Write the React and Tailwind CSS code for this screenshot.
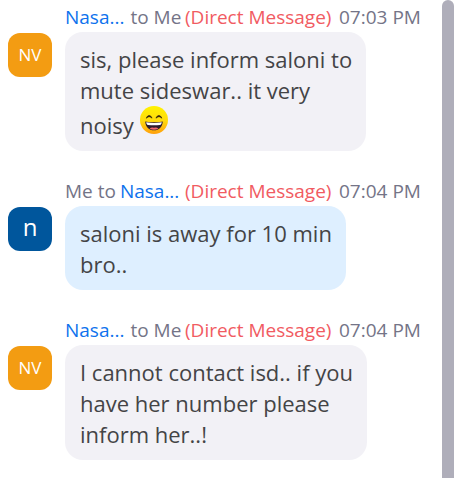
function GrinEmoji() {
  return (
    <svg role="img" aria-label="grinning face" viewBox="0 0 28 28" className="inline-block h-7 w-7 align-baseline">
      <defs>
        <linearGradient id="face" x1="0" y1="0" x2="0" y2="1">
          <stop offset="0" stopColor="#fff200" />
          <stop offset="0.5" stopColor="#ffdc0c" />
          <stop offset="1" stopColor="#ff9f0c" />
        </linearGradient>
      </defs>
      <circle cx="14" cy="14" r="14" fill="url(#face)" />
      <path d="M6.4 12.2C7.4 8.6 10.8 8.6 12 12.2C10.2 10.2 8.2 10.2 6.4 12.2Z" fill="#33240c" stroke="#33240c" strokeWidth="0.7" strokeLinejoin="round" />
      <path d="M16 12.2C17.2 8.6 20.6 8.6 21.8 12.2C20 10.2 18 10.2 16 12.2Z" fill="#33240c" stroke="#33240c" strokeWidth="0.7" strokeLinejoin="round" />
      <path d="M5.2 15.4Q14 17.2 22.8 15.4C22.4 21.2 19 24.2 14 24.2S5.6 21.2 5.2 15.4Z" fill="#2b1a2c" />
      <path d="M6.2 16.2Q14 17.7 21.8 16.2C21.5 18 20.8 18.8 20 18.9Q14 19.8 8 18.9C7 18.8 6.5 18 6.2 16.2Z" fill="#fff" />
      <path d="M9.6 22.4Q11.5 21 14 21.8Q16.5 21 18.4 22.4Q16.5 23.7 14 23.7T9.6 22.4Z" fill="#f5686c" />
    </svg>
  );
}

function Name() {
  return (
    <button type="button" className="text-[#0e72ed]">
      Nasa...
    </button>
  );
}

function Message({ mine, time, children }) {
  return (
    <li className="flex items-start gap-[13px]">
      {mine ? (
        <div className="mt-[29px] flex h-11 w-11 shrink-0 items-center justify-center rounded-xl bg-[#00569c] pb-1 text-2xl font-medium text-white">
          n
        </div>
      ) : (
        <div className="mt-[29px] flex h-11 w-11 shrink-0 items-center justify-center rounded-xl bg-[#f39c12] text-[17px] text-white">
          NV
        </div>
      )}
      <div className="min-w-0 flex-1">
        <div className="flex h-7 items-start whitespace-nowrap text-[19px] leading-[26px] text-[#747487]">
          <div className={mine ? "flex w-[120px] gap-1" : "flex w-[120px] gap-[6px]"}>
            {mine ? (
              <>
                <span>Me to</span>
                <Name />
              </>
            ) : (
              <>
                <Name />
                <span>to Me</span>
              </>
            )}
          </div>
          <span className="w-[154px] text-[#f15b62]">(Direct Message)</span>
          <time>{time}</time>
        </div>
        <p
          className={
            "w-fit rounded-[18px] pl-[15px] pr-[14px] pb-[10px] pt-3 text-[22px] leading-[31px] text-[#444446] " +
            (mine ? "bg-[#deefff]" : "bg-[#f2f1f6]")
          }
        >
          {children}
        </p>
      </div>
    </li>
  );
}

export default function App() {
  return (
    <main className="flex h-screen overflow-hidden bg-white pr-[2px] font-['Open_Sans','Noto_Sans',sans-serif]">
      <ul className="flex min-w-0 flex-1 flex-col gap-[27px] pl-2 pt-1">
        <Message time="07:03 PM">
          sis, please inform saloni to
          <br />
          mute sideswar.. it very
          <br />
          noisy <GrinEmoji />
        </Message>
        <Message mine time="07:04 PM">
          saloni is away for 10 min
          <br />
          bro..
        </Message>
        <Message time="07:04 PM">
          I cannot contact isd.. if you
          <br />
          have her number please
          <br />
          inform her..!
        </Message>
      </ul>
      <div className="w-3 shrink-0 rounded-t-full bg-[#afaeba]" />
    </main>
  );
}
